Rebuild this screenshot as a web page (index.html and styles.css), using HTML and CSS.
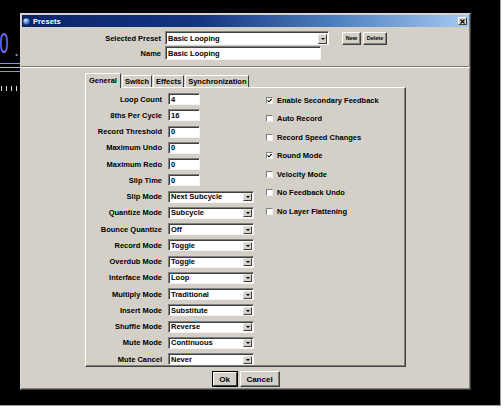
FILE: index.html
```html
<!DOCTYPE html>
<html>
<head>
<meta charset="utf-8">
<link rel="stylesheet" href="styles.css">
</head>
<body>
<div class="screen">
  <div class="backdrop">
    <span class="bd-digit">0</span>
    <span class="bd-dot">.</span>
    <span class="bd-line l1"></span>
    <span class="bd-line l2"></span>
    <span class="bd-line l3"></span>
    <span class="bd-tick t1"></span>
    <span class="bd-tick t2"></span>
    <span class="bd-tick t3"></span>
    <span class="bd-tick t4"></span>
  </div>

  <div class="dialog">
    <div class="titlebar">
      <svg class="ticon" width="7" height="7" viewBox="0 0 7 7">
        <defs>
          <radialGradient id="g" cx="0.35" cy="0.3" r="0.8">
            <stop offset="0" stop-color="#e8f2ff"/>
            <stop offset="0.5" stop-color="#5a8fd8"/>
            <stop offset="1" stop-color="#1d4a9a"/>
          </radialGradient>
        </defs>
        <circle cx="3.5" cy="3.5" r="3.3" fill="url(#g)"/>
      </svg>
      <span class="ttext">Presets</span>
      <span class="close">
        <svg width="5" height="5" viewBox="0 0 5 5"><path d="M0.5 0.5 L4.5 4.5 M4.5 0.5 L0.5 4.5" stroke="#000" stroke-width="1.1"/></svg>
      </span>
    </div>

    <div class="top">
      <span class="lbl">Selected Preset</span>
      <div class="row1">
        <div class="select wide"><span class="val">Basic Looping</span><span class="arrow"><i></i></span></div>
        <div class="sbtns">
          <span class="sbtn new">New</span>
          <span class="sbtn del">Delete</span>
        </div>
      </div>
      <span class="lbl">Name</span>
      <div class="field name">Basic Looping</div>
    </div>

    <div class="sep"></div>

    <div class="tabs">
      <span class="tab active">General</span>
      <span class="tab">Switch</span>
      <span class="tab">Effects</span>
      <span class="tab">Synchronization</span>
    </div>

    <div class="panel">
      <div class="fields">
        <span class="lbl">Loop Count</span><div class="field num">4</div>
        <span class="lbl">8ths Per Cycle</span><div class="field num">16</div>
        <span class="lbl">Record Threshold</span><div class="field num">0</div>
        <span class="lbl">Maximum Undo</span><div class="field num">0</div>
        <span class="lbl">Maximum Redo</span><div class="field num">0</div>
        <span class="lbl">Slip Time</span><div class="field num">0</div>
        <span class="lbl">Slip Mode</span><div class="select"><span class="val">Next Subcycle</span><span class="arrow"><i></i></span></div>
        <span class="lbl">Quantize Mode</span><div class="select"><span class="val">Subcycle</span><span class="arrow"><i></i></span></div>
        <span class="lbl">Bounce Quantize</span><div class="select"><span class="val">Off</span><span class="arrow"><i></i></span></div>
        <span class="lbl">Record Mode</span><div class="select"><span class="val">Toggle</span><span class="arrow"><i></i></span></div>
        <span class="lbl">Overdub Mode</span><div class="select"><span class="val">Toggle</span><span class="arrow"><i></i></span></div>
        <span class="lbl">Interface Mode</span><div class="select"><span class="val">Loop</span><span class="arrow"><i></i></span></div>
        <span class="lbl">Multiply Mode</span><div class="select"><span class="val">Traditional</span><span class="arrow"><i></i></span></div>
        <span class="lbl">Insert Mode</span><div class="select"><span class="val">Substitute</span><span class="arrow"><i></i></span></div>
        <span class="lbl">Shuffle Mode</span><div class="select"><span class="val">Reverse</span><span class="arrow"><i></i></span></div>
        <span class="lbl">Mute Mode</span><div class="select"><span class="val">Continuous</span><span class="arrow"><i></i></span></div>
        <span class="lbl">Mute Cancel</span><div class="select"><span class="val">Never</span><span class="arrow"><i></i></span></div>
      </div>

      <div class="checks">
        <div class="chk"><span class="box on"><svg width="5" height="5" viewBox="0 0 5 5"><path d="M0.5 2.3 L2 3.8 L4.6 1" fill="none" stroke="#000" stroke-width="1.1"/></svg></span>Enable Secondary Feedback</div>
        <div class="chk"><span class="box"></span>Auto Record</div>
        <div class="chk"><span class="box"></span>Record Speed Changes</div>
        <div class="chk"><span class="box on"><svg width="5" height="5" viewBox="0 0 5 5"><path d="M0.5 2.3 L2 3.8 L4.6 1" fill="none" stroke="#000" stroke-width="1.1"/></svg></span>Round Mode</div>
        <div class="chk"><span class="box"></span>Velocity Mode</div>
        <div class="chk"><span class="box"></span>No Feedback Undo</div>
        <div class="chk"><span class="box"></span>No Layer Flattening</div>
      </div>
    </div>

    <div class="actions">
      <span class="btn ok"><span class="btn-in">Ok</span></span>
      <span class="btn cancel"><span class="btn-in">Cancel</span></span>
    </div>
  </div>
</div>
</body>
</html>
```

FILE: styles.css
```css
html, body {
  margin: 0;
  padding: 0;
  background: #ffffff;
}

.screen {
  position: relative;
  width: 501px;
  height: 406px;
  box-sizing: border-box;
  background: #000;
  border-right: 1px solid #9c9c9c;
  border-bottom: 1px solid #9c9c9c;
  padding: 13px 0 0 20px;
  overflow: hidden;
}

/* background application peeking out behind the dialog */
.backdrop {
  position: absolute;
  left: 0;
  top: 0;
  width: 20px;
  height: 100px;
}
.bd-digit {
  position: absolute;
  left: -1px;
  top: 31px;
  font: 26px "DejaVu Sans", sans-serif;
  color: #6f6ee6;
  line-height: 1;
  transform: scaleX(0.6);
  transform-origin: left top;
}
.bd-dot {
  position: absolute;
  left: 14px;
  top: 43px;
  font: 16px "DejaVu Sans", sans-serif;
  color: #8c8ce8;
  line-height: 1;
}
.bd-line {
  position: absolute;
  left: 0;
  width: 20px;
  height: 1px;
  background: #8e8cf0;
}
.bd-line.l1 { top: 63px; }
.bd-line.l2 { top: 67px; background: #b8b8f4; }
.bd-line.l3 { top: 71px; }
.bd-tick {
  position: absolute;
  top: 86px;
  width: 1px;
  height: 5px;
  background: #d8d8e8;
}
.bd-tick.t1 { left: 1px; }
.bd-tick.t2 { left: 6px; }
.bd-tick.t3 { left: 11px; }
.bd-tick.t4 { left: 16px; }

/* dialog window */
.dialog {
  position: relative;
  width: 451px;
  height: 377px;
  box-sizing: border-box;
  background: #d4d0c8;
  border: 1px solid;
  border-color: #dcd9d2 #3a3a3a #3a3a3a #dcd9d2;
  box-shadow: inset -1px -1px #808080;
  padding: 1px;
  display: flex;
  flex-direction: column;
  font: bold 7.5px "Liberation Sans", Arial, sans-serif;
  color: #000;
}

.titlebar {
  height: 12px;
  display: flex;
  align-items: center;
  padding: 0 1px 0 1px;
  background: linear-gradient(90deg, #0a246a 0%, #14357f 40%, #4f7fc0 70%, #a6caf0 100%);
  color: #fff;
}
.ticon {
  display: block;
  margin-right: 3px;
}
.ttext {
  font-size: 7.5px;
  font-weight: bold;
  letter-spacing: 0.1px;
}
.close {
  margin-left: auto;
  margin-right: 1px;
  width: 9px;
  height: 8px;
  box-sizing: border-box;
  background: #d4d0c8;
  border: 1px solid;
  border-color: #fff #404040 #404040 #fff;
  display: flex;
  align-items: center;
  justify-content: center;
}
.close svg { display: block; }

/* top preset selector */
.top {
  display: grid;
  grid-template-columns: 139px auto;
  column-gap: 4px;
  row-gap: 1px;
  margin-top: 4px;
  align-items: center;
}
.lbl {
  text-align: right;
  white-space: nowrap;
}
.row1 {
  display: flex;
  align-items: center;
}

.field, .select {
  box-sizing: border-box;
  background: #fff;
  border: 1px solid;
  border-color: #808080 #f4f4f4 #f4f4f4 #808080;
  box-shadow: inset 1px 1px #404040;
  display: flex;
  align-items: center;
  padding-left: 2px;
  white-space: nowrap;
}
.select {
  padding-right: 1px;
}
.select .val {
  flex: 1;
}
.arrow {
  width: 9px;
  height: calc(100% - 2px);
  margin-top: 1px;
  box-sizing: border-box;
  background: #d4d0c8;
  border: 1px solid;
  border-color: #e8e8e8 #404040 #404040 #e8e8e8;
  display: flex;
  align-items: center;
  justify-content: center;
}
.arrow i {
  display: block;
  width: 0;
  height: 0;
  border-left: 2px solid transparent;
  border-right: 2px solid transparent;
  border-top: 2px solid #000;
}

.select.wide {
  width: 164px;
  height: 14px;
}
.field.name {
  width: 156px;
  height: 14px;
}

.sbtns {
  display: flex;
  gap: 2px;
  margin-left: 13px;
}
.sbtn {
  height: 13px;
  box-sizing: border-box;
  border: 1px solid;
  border-color: #fff #404040 #404040 #fff;
  box-shadow: inset -1px -1px #808080;
  display: flex;
  align-items: center;
  justify-content: center;
  font-size: 5.5px;
}
.sbtn.new { width: 19px; }
.sbtn.del { width: 24px; }

.sep {
  margin: 6px -1px 0;
  height: 0;
  border-top: 1px solid #7c7c7c;
  border-bottom: 1px solid #fbfbfb;
}

/* tabs */
.tabs {
  display: flex;
  align-items: flex-end;
  height: 14px;
  margin: 5px 0 0 63px;
}
.tab {
  height: 12px;
  box-sizing: border-box;
  padding: 0 2px;
  border: 1px solid;
  border-color: #fff #404040 transparent #fff;
  border-bottom: none;
  display: flex;
  align-items: center;
  margin-right: 1px;
  white-space: nowrap;
}
.tab.active {
  height: 15px;
  margin-bottom: -1px;
  padding: 0 3px 2px;
  position: relative;
  z-index: 1;
  background: #d4d0c8;
}

.panel {
  margin-left: 63px;
  width: 321px;
  height: 280px;
  box-sizing: border-box;
  border: 1px solid;
  border-color: #fff #404040 #404040 #fff;
  box-shadow: inset -1px -1px #808080;
  display: flex;
  align-items: flex-start;
  padding-top: 5px;
}

.fields {
  display: grid;
  grid-template-columns: 76px auto;
  column-gap: 6px;
  grid-auto-rows: 12px;
  row-gap: 4.25px;
  align-items: center;
}
.fields .field, .fields .select {
  height: 12px;
}
.field.num {
  width: 32px;
}
.fields .select {
  width: 86px;
}

.checks {
  display: flex;
  flex-direction: column;
  margin-left: 12px;
  margin-top: -2px;
}
.chk {
  height: 18.5px;
  display: flex;
  align-items: center;
  white-space: nowrap;
}
.box {
  width: 7px;
  height: 7px;
  box-sizing: border-box;
  background: #fff;
  border: 1px solid;
  border-color: #808080 #f0f0f0 #f0f0f0 #808080;
  margin-right: 4px;
  display: flex;
  align-items: center;
  justify-content: center;
}
.box svg { display: block; }

/* bottom buttons */
.actions {
  display: flex;
  justify-content: center;
  gap: 2px;
  margin-top: 4px;
}
.btn {
  height: 16px;
  box-sizing: border-box;
  border: 1px solid;
  border-color: #fff #404040 #404040 #fff;
  box-shadow: inset -1px -1px #808080;
  display: flex;
  align-items: center;
  justify-content: center;
  font-size: 8px;
}
.btn.ok {
  width: 26px;
  border: 1px solid #000;
  box-shadow: none;
}
.btn.ok .btn-in {
  width: 100%;
  height: 100%;
  box-sizing: border-box;
  border: 1px solid;
  border-color: #fff #404040 #404040 #fff;
  display: flex;
  align-items: center;
  justify-content: center;
}
.btn.cancel {
  width: 40px;
}
```
